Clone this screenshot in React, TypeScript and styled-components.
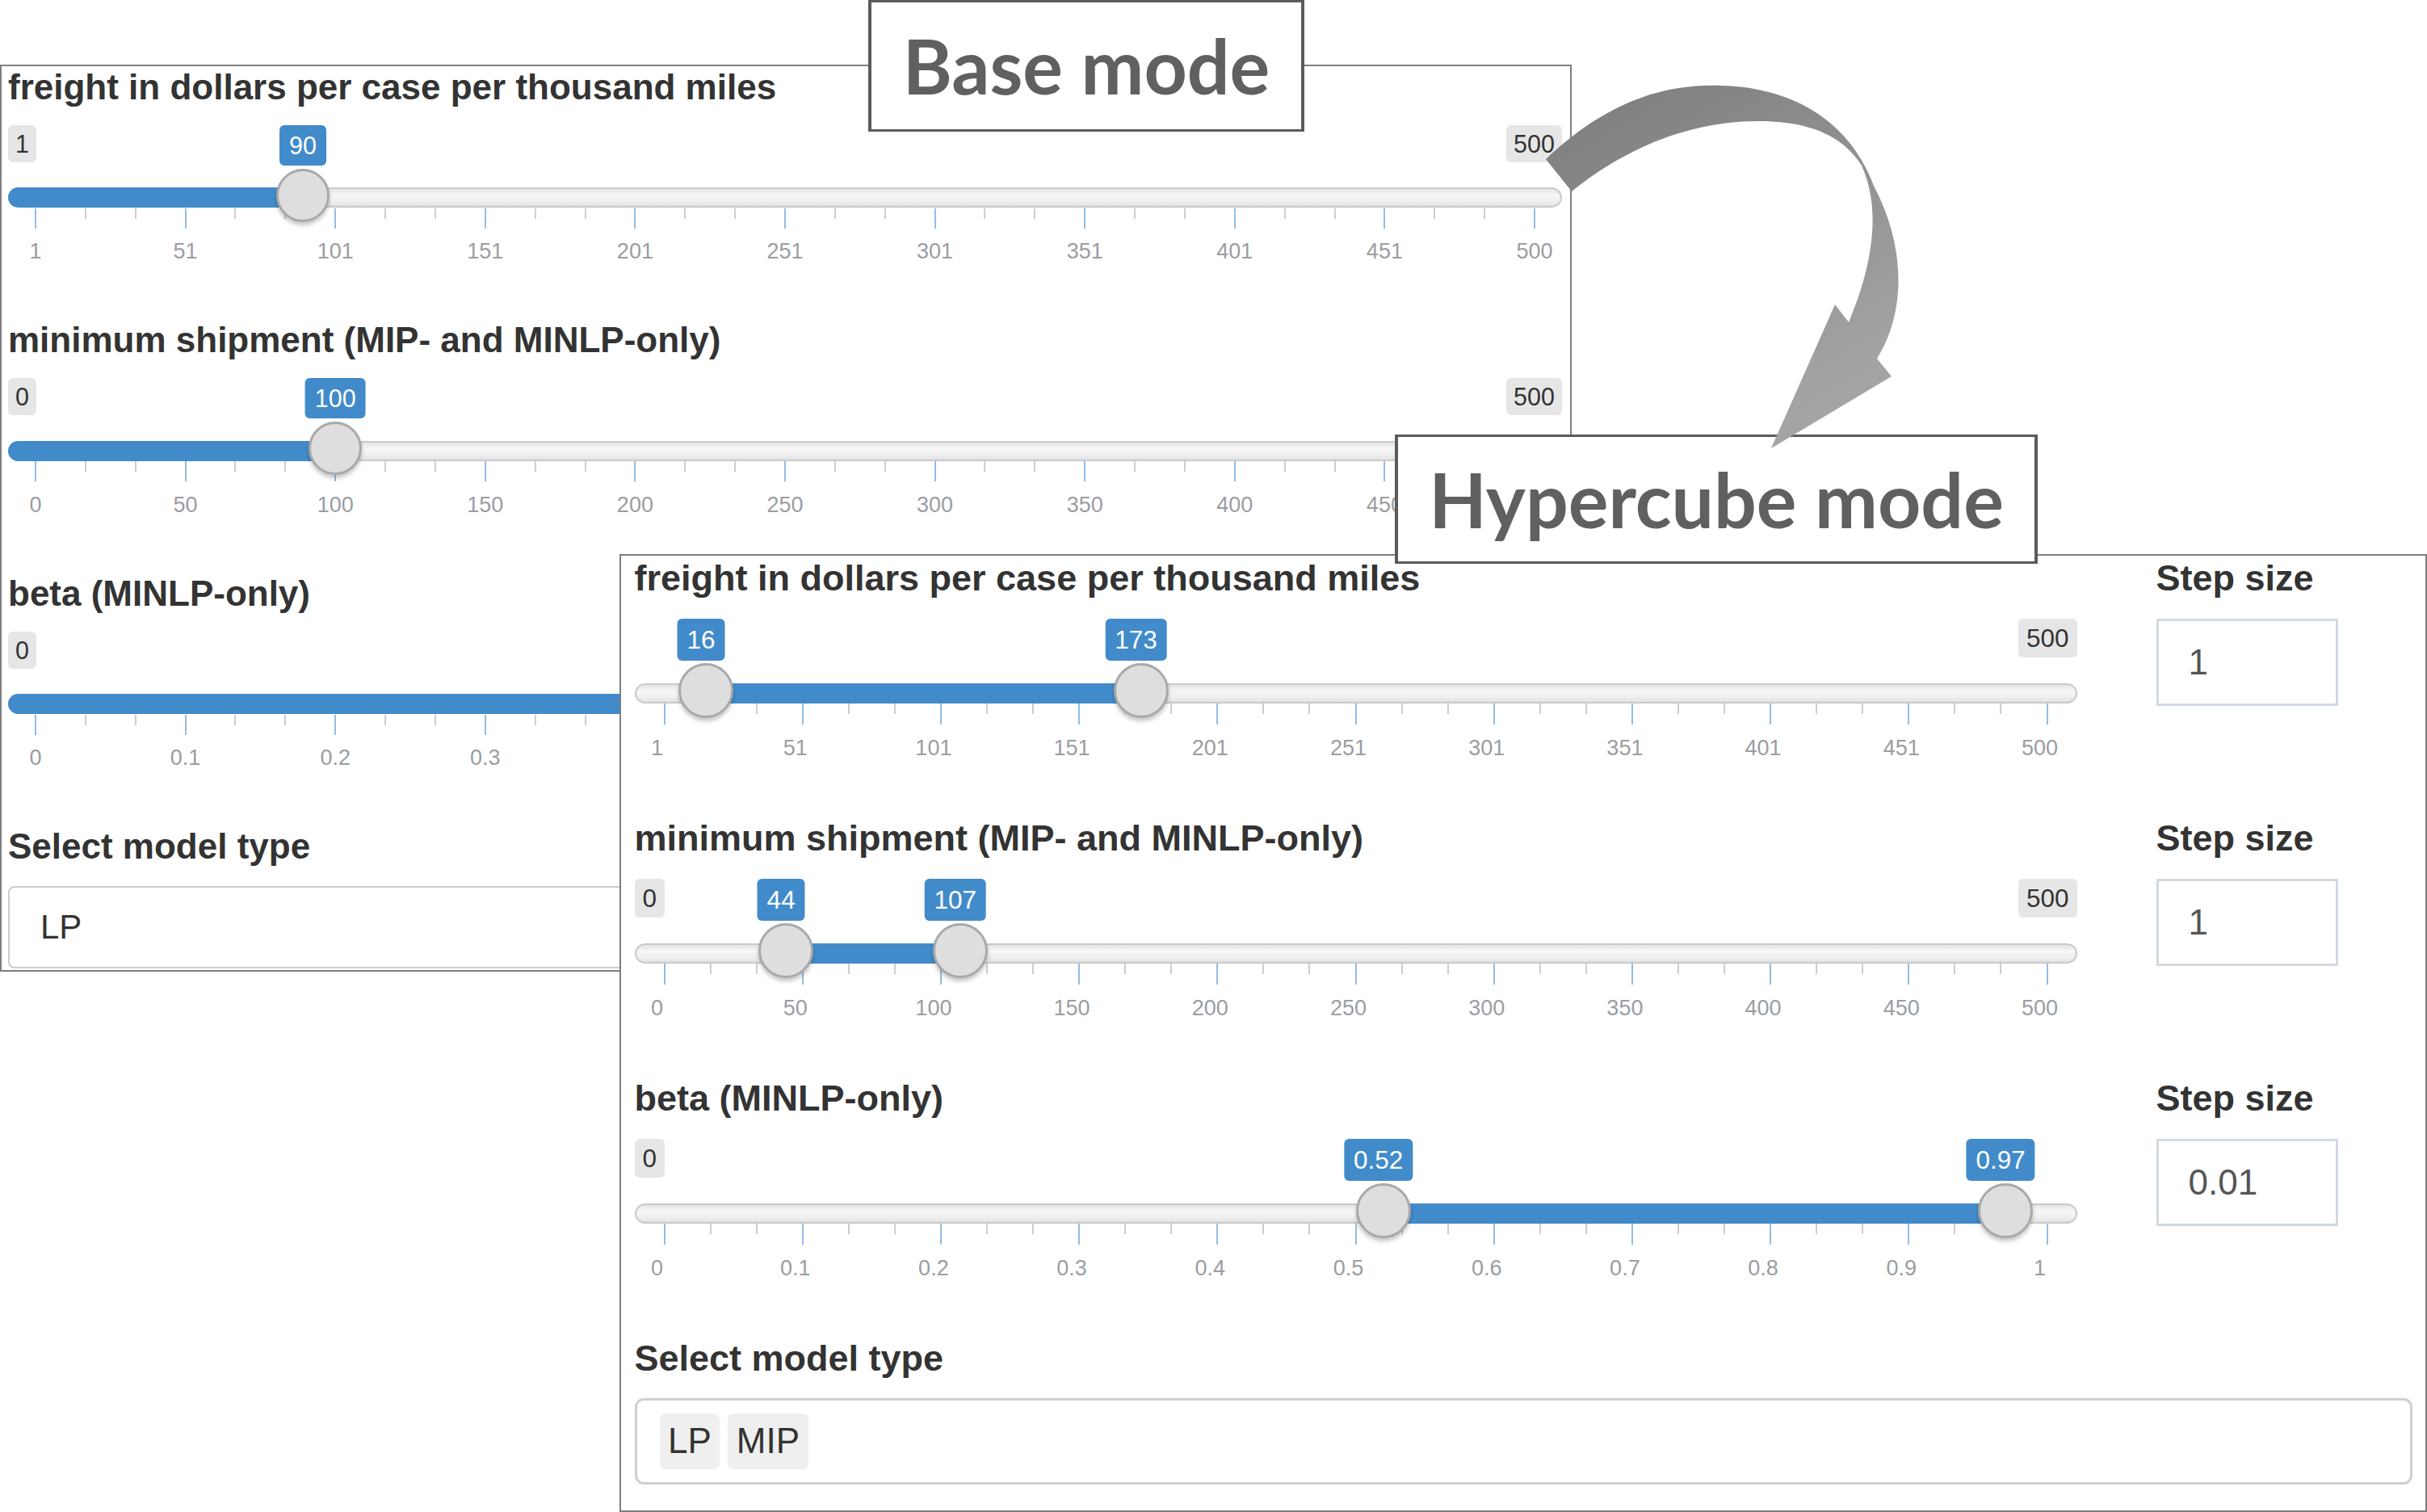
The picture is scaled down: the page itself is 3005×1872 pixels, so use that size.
import React from "react";
import styled, { createGlobalStyle } from "styled-components";

type V = "base" | "hyper";

const D = {
  base: {
    w: 1924, pad: 34, badgeH: 46, badgeFont: 30.5, trackTop: 77.5, trackH: 25,
    thumb: 66, thumbTop: 54, tickTop: 103, major: 25, minor: 13, tickLabelTop: 143.5,
    areaH: 241.7, label: 44, labelLH: 49, labelGap: 22.8, tickShift: 0, badgeShift: 0,
  },
  hyper: {
    w: 1786, pad: 37, badgeH: 48, badgeFont: 31.5, trackTop: 80, trackH: 25,
    thumb: 68, thumbTop: 55, tickTop: 105, major: 26, minor: 13, tickLabelTop: 147.5,
    areaH: 247.4, label: 45, labelLH: 50, labelGap: 24.6, tickShift: -9, badgeShift: -6,
  },
};

const GlobalStyle = createGlobalStyle`
  html, body { margin: 0; padding: 0; background: #fff; }
  body { font-family: "Liberation Sans", Arial, sans-serif; }
  * { box-sizing: border-box; }
`;

const Canvas = styled.div`
  position: relative;
  width: 3005px;
  height: 1872px;
  overflow: hidden;
  background: #fff;
`;

const Panel = styled.section<{ $left: number; $top: number; $w: number; $h: number; $pad: string }>`
  position: absolute;
  z-index: 1;
  left: ${(p) => p.$left}px;
  top: ${(p) => p.$top}px;
  width: ${(p) => p.$w}px;
  height: ${(p) => p.$h}px;
  padding: ${(p) => p.$pad};
  border: 2px solid #7d7d7d;
  background: #fff;
  overflow: hidden;
  display: flex;
  flex-direction: column;
`;

const Label = styled.div<{ $v: V; $gap?: number }>`
  font-family: "Liberation Sans", Arial, sans-serif;
  font-weight: 700;
  color: #333;
  font-size: ${(p) => D[p.$v].label}px;
  line-height: ${(p) => D[p.$v].labelLH}px;
  margin-bottom: ${(p) => (p.$gap ?? D[p.$v].labelGap)}px;
  white-space: nowrap;
`;

const Field = styled.div`
  display: flex;
  flex-direction: column;
`;

const SliderArea = styled.div<{ $v: V }>`
  position: relative;
  width: ${(p) => D[p.$v].w}px;
  height: ${(p) => D[p.$v].areaH}px;
  font-family: "Liberation Sans", Arial, sans-serif;
`;

const Track = styled.div<{ $v: V }>`
  position: absolute;
  left: 0;
  right: 0;
  top: ${(p) => D[p.$v].trackTop}px;
  height: ${(p) => D[p.$v].trackH}px;
  border: 2px solid #cacaca;
  border-radius: 14px;
  background: linear-gradient(#e4e4e4, #f6f6f6 35%, #f0f0f0 70%, #e2e2e2);
`;

const Fill = styled.div<{ $v: V; $round: boolean }>`
  position: absolute;
  top: ${(p) => D[p.$v].trackTop}px;
  height: ${(p) => D[p.$v].trackH}px;
  background: #428bca;
  border-radius: ${(p) => (p.$round ? "14px 0 0 14px" : "0")};
`;

const Thumb = styled.div<{ $v: V }>`
  position: absolute;
  top: ${(p) => D[p.$v].thumbTop}px;
  width: ${(p) => D[p.$v].thumb}px;
  height: ${(p) => D[p.$v].thumb}px;
  margin-left: ${(p) => -D[p.$v].thumb / 2}px;
  border-radius: 50%;
  background: #dedede;
  border: 3px solid #a9a9a9;
  box-shadow: 0 4px 5px rgba(0, 0, 0, 0.22);
  z-index: 2;
`;

const EdgeBadge = styled.span<{ $v: V; $side: "left" | "right" }>`
  position: absolute;
  top: 0;
  ${(p) => p.$side}: 0;
  height: ${(p) => D[p.$v].badgeH}px;
  line-height: ${(p) => D[p.$v].badgeH}px;
  padding: 0 ${(p) => (p.$v === "hyper" ? 10 : 9)}px;
  font-size: ${(p) => D[p.$v].badgeFont}px;
  color: #333;
  background: #e6e6e6;
  border-radius: 6px;
`;

const ValueBadge = styled.span<{ $v: V }>`
  position: absolute;
  top: 0;
  transform: translateX(-50%);
  margin-left: ${(p) => D[p.$v].badgeShift}px;
  height: ${(p) => D[p.$v].badgeH + 4}px;
  line-height: ${(p) => D[p.$v].badgeH + 4}px;
  padding: 0 12px;
  font-size: ${(p) => D[p.$v].badgeFont}px;
  color: #fff;
  background: #428bca;
  border-radius: 6px;
  white-space: nowrap;
  z-index: 3;
`;

const TickLayer = styled.div<{ $v: V }>`
  position: absolute;
  left: ${(p) => D[p.$v].pad}px;
  right: ${(p) => D[p.$v].pad}px;
  top: ${(p) => D[p.$v].tickTop}px;
  height: 80px;
`;

const Tick = styled.span<{ $v: V; $major: boolean }>`
  position: absolute;
  top: 0;
  width: 2px;
  margin-left: -1px;
  height: ${(p) => (p.$major ? D[p.$v].major : D[p.$v].minor)}px;
  background: ${(p) => (p.$major ? "#93bde4" : "#cdcdcd")};
`;

const TickText = styled.span<{ $v: V }>`
  position: absolute;
  top: ${(p) => D[p.$v].tickLabelTop - D[p.$v].tickTop}px;
  margin-left: ${(p) => D[p.$v].tickShift}px;
  transform: translateX(-50%);
  font-size: 27px;
  line-height: 27px;
  color: #9a9da3;
  white-space: nowrap;
`;

const HyperRow = styled.div`
  display: grid;
  grid-template-columns: 1786px 225px;
  column-gap: 98px;
`;

const StepInput = styled.div`
  width: 225px;
  height: 108px;
  border: 3px solid #d3d9e1;
  padding-left: 37px;
  display: flex;
  align-items: center;
  font-family: "Liberation Sans", Arial, sans-serif;
  font-size: 44px;
  color: #555;
`;

const SingleSelect = styled.div`
  height: 102px;
  border: 2px solid #cbcbcb;
  border-radius: 8px;
  padding-left: 38px;
  display: flex;
  align-items: center;
  font-family: "Liberation Sans", Arial, sans-serif;
  font-size: 42px;
  color: #333;
`;

const ChipSelect = styled.div`
  height: 107px;
  border: 3px solid #cfcfcf;
  border-radius: 11px;
  padding-left: 28px;
  display: flex;
  align-items: center;
  gap: 10px;
`;

const Chip = styled.span`
  height: 69px;
  padding: 0 10.5px;
  display: inline-flex;
  align-items: center;
  border-radius: 7px;
  background: #efefef;
  font-family: "Liberation Sans", Arial, sans-serif;
  font-size: 44px;
  color: #333;
`;

const ModeTag = styled.div<{ $left: number; $top: number; $w: number; $h: number }>`
  position: absolute;
  left: ${(p) => p.$left}px;
  top: ${(p) => p.$top}px;
  width: ${(p) => p.$w}px;
  height: ${(p) => p.$h}px;
  border: 3px solid #5b5b5b;
  border-left-width: 4px;
  border-right-width: 4px;
  background: #fff;
  display: flex;
  align-items: center;
  justify-content: center;
  font-family: Lato, "Open Sans", sans-serif;
  font-weight: 700;
  font-size: 93px;
  line-height: 1;
  color: #5f6062;
  white-space: nowrap;
  z-index: 5;
`;

const ArrowSvg = styled.svg`
  position: absolute;
  left: 1900px;
  top: 90px;
  width: 480px;
  height: 480px;
  z-index: 6;
`;

type SliderProps = {
  v: V;
  min: number;
  max: number;
  values: number[];
  ticks: string[];
  hideMin?: boolean;
  hideMax?: boolean;
};

function Slider({ v, min, max, values, ticks, hideMin, hideMax }: SliderProps) {
  const d = D[v];
  const pos = (x: number) => d.pad + ((x - min) / (max - min)) * (d.w - 2 * d.pad);
  const single = values.length === 1;
  const fillLeft = single ? 0 : pos(values[0]);
  const fillRight = pos(values[values.length - 1]);
  const marks: { f: number; major: boolean }[] = [];
  for (let i = 0; i <= 10; i++) {
    marks.push({ f: i / 10, major: true });
    if (i < 10) {
      marks.push({ f: (i + 1 / 3) / 10, major: false });
      marks.push({ f: (i + 2 / 3) / 10, major: false });
    }
  }
  return (
    <SliderArea $v={v}>
      {!hideMin && <EdgeBadge $v={v} $side="left">{String(min)}</EdgeBadge>}
      {!hideMax && <EdgeBadge $v={v} $side="right">{String(max)}</EdgeBadge>}
      <Track $v={v} />
      <Fill $v={v} $round={single} style={{ left: fillLeft, width: fillRight - fillLeft }} />
      <TickLayer $v={v}>
        {marks.map((m, i) => (
          <Tick key={i} $v={v} $major={m.major} style={{ left: `${m.f * 100}%` }} />
        ))}
        {ticks.map((t, i) => (
          <TickText key={t} $v={v} style={{ left: `${(i / 10) * 100}%` }}>{t}</TickText>
        ))}
      </TickLayer>
      {values.map((x, i) => (
        <React.Fragment key={i}>
          <ValueBadge $v={v} style={{ left: pos(x) }}>{String(x)}</ValueBadge>
          <Thumb $v={v} style={{ left: pos(x) }} />
        </React.Fragment>
      ))}
    </SliderArea>
  );
}

const freightTicks = ["1", "51", "101", "151", "201", "251", "301", "351", "401", "451", "500"];
const shipTicks = ["0", "50", "100", "150", "200", "250", "300", "350", "400", "450", "500"];
const betaTicks = ["0", "0.1", "0.2", "0.3", "0.4", "0.5", "0.6", "0.7", "0.8", "0.9", "1"];

const FREIGHT = "freight in dollars per case per thousand miles";
const SHIP = "minimum shipment (MIP- and MINLP-only)";
const BETA = "beta (MINLP-only)";

const baseSliders = [
  { label: FREIGHT, min: 1, max: 500, values: [90], ticks: freightTicks },
  { label: SHIP, min: 0, max: 500, values: [100], ticks: shipTicks },
  { label: BETA, min: 0, max: 1, values: [0.7], ticks: betaTicks },
];

const hyperSliders = [
  { label: FREIGHT, min: 1, max: 500, values: [16, 173], ticks: freightTicks, step: "1", hideMin: true, hideMax: false },
  { label: SHIP, min: 0, max: 500, values: [44, 107], ticks: shipTicks, step: "1", hideMin: false, hideMax: false },
  { label: BETA, min: 0, max: 1, values: [0.52, 0.97], ticks: betaTicks, step: "0.01", hideMin: false, hideMax: true },
];

function Arrow() {
  return (
    <ArrowSvg viewBox="1900 90 480 480">
      <defs>
        <linearGradient id="arrowGrad" x1="0" y1="0" x2="0.55" y2="1">
          <stop offset="0" stopColor="#7c7c7c" />
          <stop offset="1" stopColor="#a4a4a4" />
        </linearGradient>
      </defs>
      <path
        fill="url(#arrowGrad)"
        d="M 1914 197 C 1990 125, 2060 104, 2131 106 C 2220 108, 2290 150, 2320 230 C 2362 310, 2358 390, 2324 444 L 2342 466 L 2193 555 L 2272 377 L 2289 399 C 2318 330, 2330 260, 2305 205 C 2280 165, 2235 150, 2177 150 C 2090 150, 2010 185, 1946 237 Z"
      />
    </ArrowSvg>
  );
}

export default function App() {
  return (
    <>
      <GlobalStyle />
      <Canvas>
        <Panel $left={0} $top={80} $w={1946} $h={1123} $pad="1px 10px 0 8px">
          {baseSliders.map((s) => (
            <Field key={s.label}>
              <Label $v="base">{s.label}</Label>
              <Slider v="base" min={s.min} max={s.max} values={s.values} ticks={s.ticks} />
            </Field>
          ))}
          <Label $v="base" $gap={24.4}>Select model type</Label>
          <SingleSelect>LP</SingleSelect>
        </Panel>

        <Panel $left={767} $top={686} $w={2238} $h={1186} $pad="3.4px 16px 0 16.5px">
          {hyperSliders.map((s) => (
            <HyperRow key={s.label}>
              <Field>
                <Label $v="hyper">{s.label}</Label>
                <Slider
                  v="hyper"
                  min={s.min}
                  max={s.max}
                  values={s.values}
                  ticks={s.ticks}
                  hideMin={s.hideMin}
                  hideMax={s.hideMax}
                />
              </Field>
              <Field>
                <Label $v="hyper">Step size</Label>
                <StepInput>{s.step}</StepInput>
              </Field>
            </HyperRow>
          ))}
          <Label $v="hyper" $gap={23.6}>Select model type</Label>
          <ChipSelect>
            <Chip>LP</Chip>
            <Chip>MIP</Chip>
          </ChipSelect>
        </Panel>

        <ModeTag $left={1075} $top={0} $w={540} $h={163}>Base mode</ModeTag>
        <ModeTag $left={1727} $top={538} $w={796} $h={160}>Hypercube mode</ModeTag>
        <Arrow />
      </Canvas>
    </>
  );
}
